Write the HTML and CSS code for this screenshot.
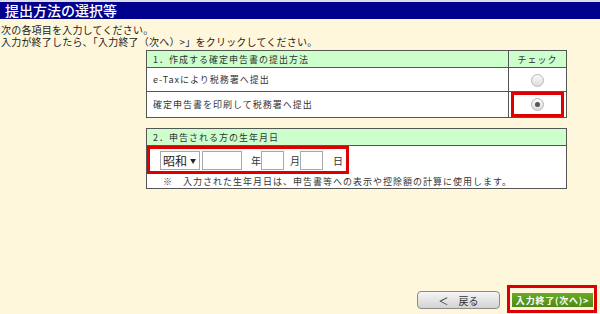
FILE: index.html
```html
<!DOCTYPE html>
<html lang="ja">
<head>
<meta charset="utf-8">
<title>提出方法の選択等</title>
<link rel="stylesheet" href="styles.css">
</head>
<body>
<header class="title-bar"><h1>提出方法の選択等</h1></header>
<div class="intro">
  <p>次の各項目を入力してください。</p>
  <p>入力が終了したら、「入力終了（次へ）&gt;」をクリックしてください。</p>
</div>
<table class="form-table method">
  <tr class="head">
    <td class="label">1．作成する確定申告書の提出方法</td>
    <td class="check">チェック</td>
  </tr>
  <tr class="row">
    <td class="label">e-Taxにより税務署へ提出</td>
    <td class="check"><span class="radio"></span></td>
  </tr>
  <tr class="row">
    <td class="label">確定申告書を印刷して税務署へ提出</td>
    <td class="check"><div class="mark mark-radio"><span class="radio checked"></span></div></td>
  </tr>
</table>
<table class="form-table birth">
  <tr class="head">
    <td class="label">2．申告される方の生年月日</td>
  </tr>
  <tr>
    <td class="birth-body">
      <div class="mark date-row">
        <span class="era">昭和<span class="caret">▼</span></span>
        <span class="field f-year"></span>
        <span class="unit u-year">年</span>
        <span class="field f-small"></span>
        <span class="unit u-month">月</span>
        <span class="field f-small"></span>
        <span class="unit u-day">日</span>
      </div>
      <p class="note">※　入力された生年月日は、申告書等への表示や控除額の計算に使用します。</p>
    </td>
  </tr>
</table>
<div class="actions">
  <button class="btn-back">＜　戻る</button>
  <div class="mark mark-next"><button class="btn-next">入力終了(次へ)&gt;</button></div>
</div>
</body>
</html>
```
FILE: styles.css
```css
html, body {
  margin: 0;
  padding: 0;
}
body {
  width: 600px;
  height: 314px;
  overflow: hidden;
  background: #fff7dc;
  font-family: "Noto Sans CJK JP", "Noto Sans", sans-serif;
  color: #222;
  display: flex;
  flex-direction: column;
}
.title-bar {
  border-top: 2px solid #dcdce8;
  background: #00008f;
  height: 17px;
  display: flex;
  align-items: center;
}
.title-bar h1 {
  margin: 0 0 0 5px;
  font-size: 14px;
  font-weight: 500;
  color: #fff;
  line-height: 17px;
  letter-spacing: 0;
}
.intro {
  padding: 5px 0 0 1px;
}
.intro p {
  margin: 0;
  font-size: 10px;
  line-height: 12px;
  letter-spacing: 0.2px;
}
.form-table {
  margin-left: 146px;
  width: 421px;
  border-collapse: collapse;
  border: 1px solid #555;
  background: #fff;
}
.form-table td {
  border: 1px solid #555;
  padding: 0;
  font-size: 9px;
  letter-spacing: 1px;
  color: #333;
}
.method {
  margin-top: 2px;
}
.form-table .head td {
  background: #ccffcc;
  height: 16px;
}
.form-table .label {
  padding-left: 6px;
}
.method .row td {
  height: 23px;
}
.method .check {
  width: 57px;
  text-align: center;
}
.radio {
  display: inline-block;
  width: 11px;
  height: 11px;
  border-radius: 50%;
  border: 1px solid #b8b8b8;
  background: linear-gradient(#fafafa, #dcdcdc);
  vertical-align: middle;
  position: relative;
}
.radio.checked::after {
  content: "";
  position: absolute;
  left: 3px;
  top: 3px;
  width: 5px;
  height: 5px;
  border-radius: 50%;
  background: #555;
}
.mark {
  border: 3px solid #dd0000;
  box-sizing: border-box;
}
.mark-radio {
  margin: 0 2px 0 2px;
  height: 25px;
  display: flex;
  align-items: center;
  justify-content: center;
}
.birth {
  margin-top: 10px;
}
.birth-body {
  padding: 4px 0 7px 2px;
}
.date-row {
  width: 202px;
  height: 28px;
  display: flex;
  align-items: center;
  padding-left: 10px;
}
.era {
  width: 40px;
  flex: none;
  height: 19px;
  box-sizing: border-box;
  border: 1px solid #a8a8a8;
  background: #fff;
  font-size: 12px;
  letter-spacing: 0;
  line-height: 17px;
  padding-left: 2px;
  color: #222;
  white-space: nowrap;
  display: flex;
  align-items: center;
  overflow: hidden;
}
.caret {
  font-size: 6px;
  margin-left: 3px;
}
.field {
  flex: none;
  height: 19px;
  box-sizing: border-box;
  border: 1px solid #a8a8a8;
  background: #fff;
}
.f-year {
  width: 40px;
  margin-left: 2px;
}
.f-small {
  width: 23px;
}
.unit {
  flex: none;
  font-size: 10px;
  letter-spacing: 0;
  color: #333;
  width: 10px;
}
.u-year {
  margin-left: 9px;
}
.u-month {
  margin-left: 6px;
}
.u-day {
  margin-left: 10px;
}
.note {
  margin: 2px 0 0 16px;
  font-size: 9px;
  letter-spacing: 1px;
  line-height: 12px;
  color: #333;
}
.actions {
  margin-top: auto;
  display: flex;
  justify-content: flex-end;
  align-items: center;
  padding: 0 3px 1px 0;
}
.btn-back {
  width: 83px;
  height: 18px;
  border: 1px solid #8a8a8a;
  border-radius: 4px;
  background: linear-gradient(#f6f6f6, #d2d2d2);
  font-family: "Noto Sans CJK JP", sans-serif;
  font-size: 10px;
  color: #333;
  padding: 0;
  margin-right: 7px;
  margin-top: 2px;
}
.mark-next {
  width: 90px;
  height: 28px;
  display: flex;
  align-items: center;
  padding: 2px 0 0 2px;
}
.btn-next {
  width: 81px;
  height: 14px;
  border: none;
  padding: 0;
  background: linear-gradient(#6aaa28, #4d8a16);
  color: #fff;
  font-family: "Noto Sans CJK JP", sans-serif;
  font-size: 9px;
  font-weight: 700;
  letter-spacing: 0.8px;
  white-space: nowrap;
  overflow: hidden;
}
```
